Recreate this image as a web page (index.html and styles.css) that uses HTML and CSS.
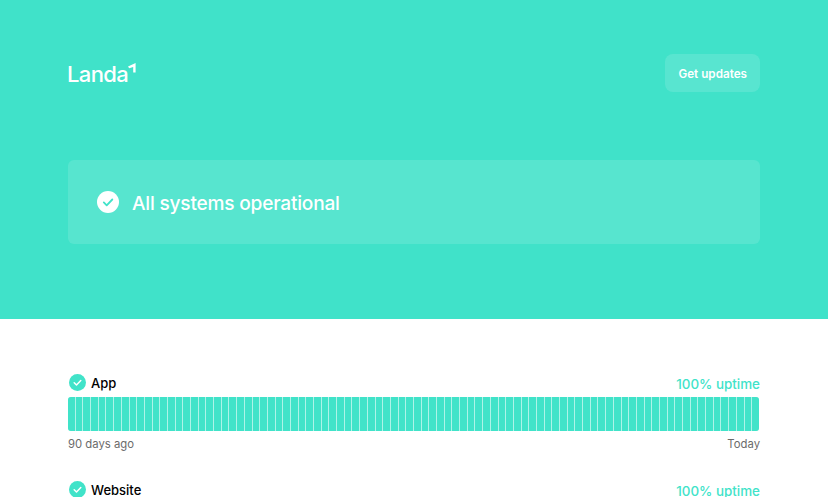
FILE: index.html
```html
<!DOCTYPE html>
<html lang="en">
<head>
<meta charset="utf-8">
<title>Landa status</title>
<link rel="stylesheet" href="styles.css">
</head>
<body>
<header class="hero">
  <div class="topbar">
    <div class="logo"><span>Landa</span><svg class="logo-mark" width="8" height="10" viewBox="0 0 8 10"><path d="M0 3.6 7.6 0V9.4H5.2V4L1.2 5.2Z" fill="#fff"/></svg></div>
    <a class="btn">Get updates</a>
  </div>
  <div class="banner">
    <svg class="banner-icon" width="22" height="22" viewBox="0 0 22 22"><circle cx="11" cy="11" r="11" fill="#fff"/><path d="M6.8 11.4l2.9 2.9 5.6-5.8" fill="none" stroke="#41e3c9" stroke-width="1.8" stroke-linecap="round" stroke-linejoin="round"/></svg>
    <span class="banner-text">All systems operational</span>
  </div>
</header>
<main class="services">
  <section class="service">
    <div class="service-head">
      <div class="service-name"><svg width="17" height="17" viewBox="0 0 17 17"><circle cx="8.5" cy="8.5" r="8.5" fill="#41e3c9"/><path d="M5.2 8.8l2.3 2.2 4.3-4.5" fill="none" stroke="#fff" stroke-width="1.5" stroke-linecap="round" stroke-linejoin="round"/></svg><span>App</span></div>
      <div class="uptime">100% uptime</div>
    </div>
    <div class="bars"><i></i><i></i><i></i><i></i><i></i><i></i><i></i><i></i><i></i><i></i><i></i><i></i><i></i><i></i><i></i><i></i><i></i><i></i><i></i><i></i><i></i><i></i><i></i><i></i><i></i><i></i><i></i><i></i><i></i><i></i><i></i><i></i><i></i><i></i><i></i><i></i><i></i><i></i><i></i><i></i><i></i><i></i><i></i><i></i><i></i><i></i><i></i><i></i><i></i><i></i><i></i><i></i><i></i><i></i><i></i><i></i><i></i><i></i><i></i><i></i><i></i><i></i><i></i><i></i><i></i><i></i><i></i><i></i><i></i><i></i><i></i><i></i><i></i><i></i><i></i><i></i><i></i><i></i><i></i><i></i><i></i><i></i><i></i><i></i><i></i><i></i><i></i><i></i><i></i><i></i></div>
    <div class="range"><span>90 days ago</span><span>Today</span></div>
  </section>
  <section class="service">
    <div class="service-head">
      <div class="service-name"><svg width="17" height="17" viewBox="0 0 17 17"><circle cx="8.5" cy="8.5" r="8.5" fill="#41e3c9"/><path d="M5.2 8.8l2.3 2.2 4.3-4.5" fill="none" stroke="#fff" stroke-width="1.5" stroke-linecap="round" stroke-linejoin="round"/></svg><span>Website</span></div>
      <div class="uptime">100% uptime</div>
    </div>
  </section>
</main>
</body>
</html>
```
FILE: styles.css
```css
* { box-sizing: border-box; }
html, body { margin: 0; height: 100%; overflow: hidden; }
body { background: #fff; font-family: Inter, "Liberation Sans", sans-serif; color: #000; }
.hero { height: 319px; background: #40e2c9; padding: 54px 68px 0; }
.topbar { display: flex; justify-content: space-between; align-items: center; height: 38px; }
.logo { display: flex; align-items: flex-start; color: #fff; font-size: 22px; font-weight: 500; line-height: 28px; letter-spacing: -0.6px; margin: 2px 0 0 -1px; }
.logo-mark { margin: 3px 0 0 0; }
.btn { display: flex; align-items: center; height: 38px; padding: 1px 13px 0; border-radius: 8px; background: rgba(255,255,255,.13); color: #fff; font-size: 11.7px; font-weight: 600; }
.banner { display: flex; align-items: center; gap: 13px; height: 84px; margin-top: 68px; padding-left: 29px; border-radius: 6px; background: rgba(255,255,255,.12); color: #fff; font-size: 19.1px; font-weight: 500; letter-spacing: -0.2px; }
.banner-text { padding-top: 2px; }
.services { padding: 53px 68px 0; }
.service { margin-bottom: 27px; }
.service-head { display: flex; justify-content: space-between; align-items: center; height: 21px; }
.service-name { display: flex; align-items: center; gap: 5px; margin-left: 1px; font-size: 13px; font-weight: 500; }
.uptime { color: #41e3c9; font-size: 13.4px; font-weight: 500; padding-top: 2px; }
.bars { display: flex; gap: 1px; height: 34px; margin: 4px 1px 0 0; border-radius: 3px; overflow: hidden; background: #aef3e8; }
.bars i { flex: 1; background: #41e3c9; }
.range { display: flex; justify-content: space-between; margin-top: 5px; color: #6b6b6b; font-size: 11.3px; line-height: 16px; }
```
